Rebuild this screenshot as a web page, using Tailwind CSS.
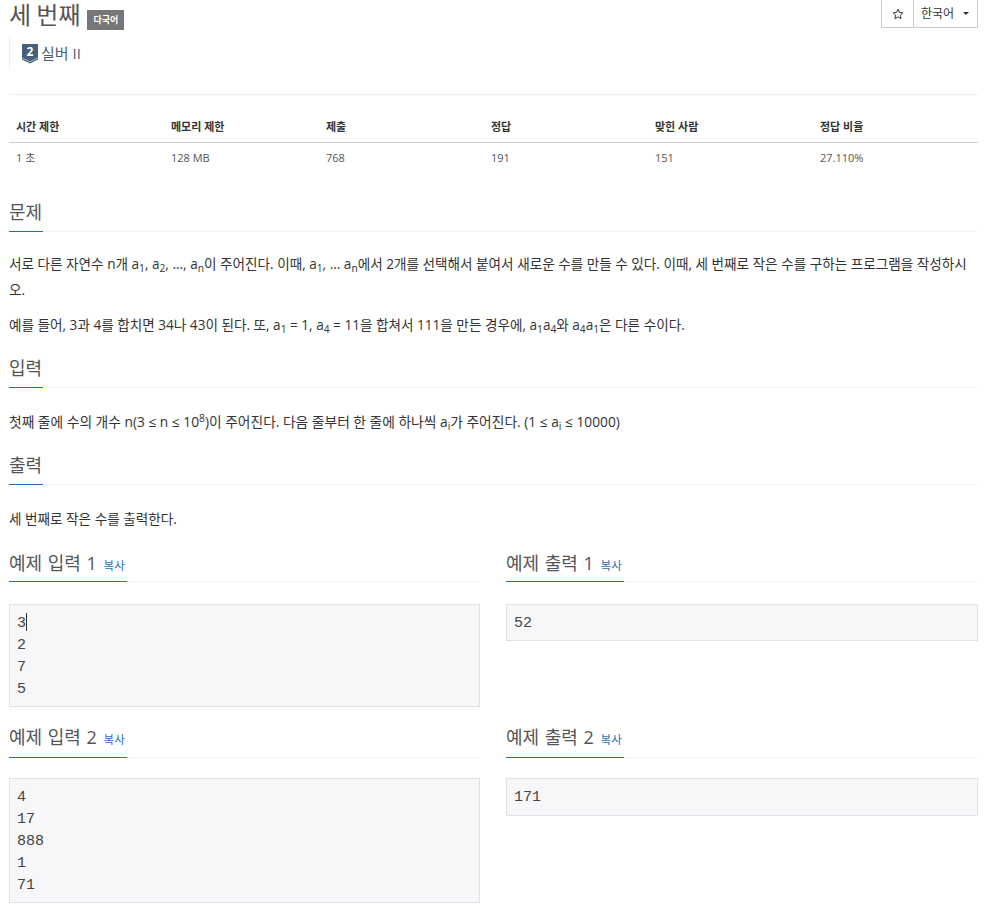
<!DOCTYPE html>
<html lang="ko">
<head>
  <meta charset="UTF-8">
  <title>세 번째</title>
  <script src="https://cdn.jsdelivr.net/npm/@tailwindcss/browser@4"></script>
</head>
<body class="bg-white text-[#333] text-[14px] font-['Open_Sans','Noto_Sans_CJK_KR',sans-serif] overflow-hidden">
<div class="w-[988px] h-[910px] pl-[9px] pr-[10px]">

  <!-- Title -->
  <div class="h-[95px] border-b border-[#eee]">
    <div class="flex items-start justify-between h-[36px]">
      <div class="flex items-center">
        <h1 class="text-[24px] leading-[28px] text-[#555] [word-spacing:-1px]">세 번째</h1>
        <span class="ml-[7px] mt-[10px] w-[37px] h-[20px] bg-[#777] text-white text-[9px] font-bold flex items-center justify-center">다국어</span>
      </div>
      <div class="flex h-[28px] border border-[#ccc] border-t-0 text-[12px] text-[#333]">
        <div class="w-[32px] flex items-center justify-center border-r border-[#ccc]">
          <svg width="12" height="12" viewBox="0 0 24 24" fill="none" stroke="#333" stroke-width="2"><path d="M12 2.5l2.9 6.4 6.9.8-5.1 4.7 1.4 6.9-6.1-3.5-6.1 3.5 1.4-6.9-5.1-4.7 6.9-.8z"/></svg>
        </div>
        <div class="w-[63px] flex items-center pl-[7px]">
          <span>한국어</span>
          <span class="ml-[9px] w-0 h-0 border-x-[3px] border-x-transparent border-t-[3px] border-t-[#333]"></span>
        </div>
      </div>
    </div>
    <div class="mt-[1px] h-[33px] border-l border-[#eee] pl-[12px] flex items-center gap-[3px] text-[15px] text-[#435f7a]">
      <svg width="16" height="20" viewBox="0 0 16 20">
        <path d="M0 0h16v13.5l-8 4-8-4z" fill="#435f7a"/>
        <path d="M0 15.5l8 4 8-4v-1.5l-8 4-8-4z" fill="#435f7a"/>
        <text x="8" y="11.5" text-anchor="middle" fill="#fff" font-size="12" font-weight="700" font-family="Open Sans">2</text>
      </svg>
      <span>실버 II</span>
    </div>
  </div>

  <!-- Stats table -->
  <table class="w-full mt-[17px] border-collapse table-fixed text-[11px]">
    <thead>
      <tr class="h-[30px] border-b border-[#ccc] text-left font-bold text-[#333]">
        <th class="w-[155px] pl-[7px] font-bold">시간 제한</th>
        <th class="w-[155px] pl-[7px] font-bold">메모리 제한</th>
        <th class="w-[165px] pl-[7px] font-bold">제출</th>
        <th class="w-[164px] pl-[7px] font-bold">정답</th>
        <th class="w-[165px] pl-[7px] font-bold">맞힌 사람</th>
        <th class="pl-[7px] font-bold">정답 비율</th>
      </tr>
    </thead>
    <tbody>
      <tr class="h-[31px] text-[#555]">
        <td class="pl-[7px]">1 초</td>
        <td class="pl-[7px]">128 MB</td>
        <td class="pl-[7px]">768</td>
        <td class="pl-[7px]">191</td>
        <td class="pl-[7px]">151</td>
        <td class="pl-[7px]">27.110%</td>
      </tr>
    </tbody>
  </table>

  <!-- Problem -->
  <div class="mt-[22px] h-[37px] border-b border-dotted border-[#e5e5e5]">
    <h2 class="inline-block h-[37px] border-b border-[#2a6ebb] text-[18px] leading-[34px] text-[#555] pr-[1px]">문제</h2>
  </div>
  <p class="mt-[19px] leading-[26px] text-[13.6px] text-[#333] break-all">서로 다른 자연수 n개 a<sub>1</sub>, a<sub>2</sub>, ..., a<sub>n</sub>이 주어진다. 이때, a<sub>1</sub>, ... a<sub>n</sub>에서 2개를 선택해서 붙여서 새로운 수를 만들 수 있다. 이때, 세 번째로 작은 수를 구하는 프로그램을 작성하시오.</p>
  <p class="mt-[9px] leading-[26px] text-[13.6px] text-[#333]">예를 들어, 3과 4를 합치면 34나 43이 된다. 또, a<sub>1</sub> = 1, a<sub>4</sub> = 11을 합쳐서 111을 만든 경우에, a<sub>1</sub>a<sub>4</sub>와 a<sub>4</sub>a<sub>1</sub>은 다른 수이다.</p>

  <!-- Input -->
  <div class="mt-[13px] h-[37px] border-b border-dotted border-[#e5e5e5]">
    <h2 class="inline-block h-[37px] border-b border-[#2a6ebb] text-[18px] leading-[34px] text-[#555] pr-[1px]">입력</h2>
  </div>
  <p class="mt-[21px] leading-[26px] text-[13.75px] text-[#333]">첫째 줄에 수의 개수 n(3 ≤ n ≤ 10<sup>8</sup>)이 주어진다. 다음 줄부터 한 줄에 하나씩 a<sub>i</sub>가 주어진다. (1 ≤ a<sub>i</sub> ≤ 10000)</p>

  <!-- Output -->
  <div class="mt-[13px] h-[37px] border-b border-dotted border-[#e5e5e5]">
    <h2 class="inline-block h-[37px] border-b border-[#2a6ebb] text-[18px] leading-[34px] text-[#555] pr-[1px]">출력</h2>
  </div>
  <p class="mt-[21px] leading-[26px] text-[13.6px] text-[#333]">세 번째로 작은 수를 출력한다.</p>

  <!-- Samples -->
  <div class="mt-[12px] grid grid-cols-[471px_472px] gap-x-[26px]">
    <div class="h-[176px]">
      <div class="h-[38px] border-b border-dotted border-[#e5e5e5]">
        <h2 class="inline-block h-[38px] border-b border-[#2a6ebb] text-[18px] leading-[38px] text-[#555] pr-[2px] [word-spacing:1px]">예제 입력 1 <a class="text-[11.5px] text-[#2a6ebb] ml-[1px]">복사</a></h2>
      </div>
      <div class="relative mt-[22px] w-full h-[103px] bg-[#f7f7f9] border border-[#e1e1e8] px-[7px] pt-[8px] font-['Liberation_Mono',monospace] text-[15px] leading-[22px] text-[#444] whitespace-pre">3
2
7
5<span class="absolute left-[16px] top-[8px] w-px h-[18px] bg-[#333]"></span></div>
    </div>
    <div class="h-[176px]">
      <div class="h-[38px] border-b border-dotted border-[#e5e5e5]">
        <h2 class="inline-block h-[38px] border-b border-[#2a6ebb] text-[18px] leading-[38px] text-[#555] pr-[2px] [word-spacing:1px]">예제 출력 1 <a class="text-[11.5px] text-[#2a6ebb] ml-[1px]">복사</a></h2>
      </div>
      <div class="mt-[22px] w-full h-[37px] bg-[#f7f7f9] border border-[#e1e1e8] px-[7px] pt-[8px] font-['Liberation_Mono',monospace] text-[15px] leading-[22px] text-[#444] whitespace-pre">52</div>
    </div>
    <div>
      <div class="h-[38px] border-b border-dotted border-[#e5e5e5]">
        <h2 class="inline-block h-[38px] border-b border-[#2a6ebb] text-[18px] leading-[35px] text-[#555] pr-[2px] [word-spacing:1px]">예제 입력 2 <a class="text-[11.5px] text-[#2a6ebb] ml-[1px]">복사</a></h2>
      </div>
      <div class="mt-[20px] w-full h-[125px] bg-[#f7f7f9] border border-[#e1e1e8] px-[7px] pt-[8px] font-['Liberation_Mono',monospace] text-[15px] leading-[22px] text-[#444] whitespace-pre">4
17
888
1
71</div>
    </div>
    <div>
      <div class="h-[38px] border-b border-dotted border-[#e5e5e5]">
        <h2 class="inline-block h-[38px] border-b border-[#2a6ebb] text-[18px] leading-[35px] text-[#555] pr-[2px] [word-spacing:1px]">예제 출력 2 <a class="text-[11.5px] text-[#2a6ebb] ml-[1px]">복사</a></h2>
      </div>
      <div class="mt-[20px] w-full h-[38px] bg-[#f7f7f9] border border-[#e1e1e8] px-[7px] pt-[8px] font-['Liberation_Mono',monospace] text-[15px] leading-[22px] text-[#444] whitespace-pre">171</div>
    </div>
  </div>

</div>
</body>
</html>
